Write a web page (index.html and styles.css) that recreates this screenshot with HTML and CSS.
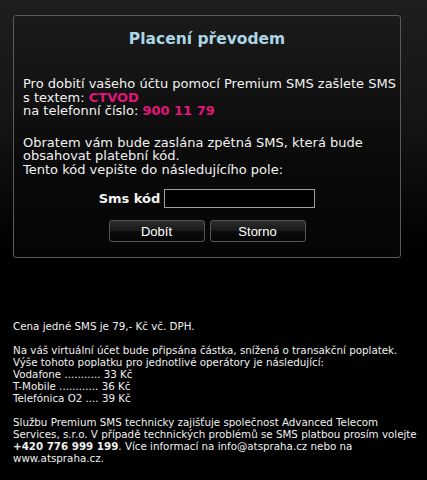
FILE: index.html
```html
<!DOCTYPE html>
<html lang="cs">
<head>
  <meta charset="UTF-8">
  <title>Placení převodem</title>
  <link rel="stylesheet" href="styles.css">
</head>
<body>
  <div class="panel">
    <h1>Placení převodem</h1>

    <p class="info">
      Pro dobití vašeho účtu pomocí Premium SMS zašlete SMS<br>
      s textem: <strong class="pink">CTVOD</strong><br>
      na telefonní číslo: <strong class="pink">900 11 79</strong>
    </p>

    <p class="info">
      Obratem vám bude zaslána zpětná SMS, která bude<br>
      obsahovat platební kód.<br>
      Tento kód vepište do následujícího pole:
    </p>

    <div class="code-row">
      <label for="sms-code">Sms kód</label>
      <input type="text" id="sms-code">
    </div>

    <div class="buttons">
      <button class="btn">Dobít</button>
      <button class="btn">Storno</button>
    </div>
  </div>

  <div class="notes">
    <p>Cena jedné SMS je 79,- Kč vč. DPH.</p>
    <p>
      Na váš virtuální účet bude připsána částka, snížená o transakční poplatek.<br>
      Výše tohoto poplatku pro jednotlivé operátory je následující:<br>
      Vodafone ........... 33 Kč<br>
      T-Mobile ............ 36 Kč<br>
      Telefónica O2 .... 39 Kč
    </p>
    <p>
      Službu Premium SMS technicky zajišťuje společnost Advanced Telecom
      Services, s.r.o. V případě technických problémů se SMS platbou prosím volejte
      <b>+420 776 999 199</b>. Více informací na info@atspraha.cz nebo na
      www.atspraha.cz.
    </p>
  </div>
</body>
</html>
```

FILE: styles.css
```css
html {
  background: #000;
}

body {
  margin: 0;
  min-height: 480px;
  font-family: "DejaVu Sans", Verdana, sans-serif;
  color: #f2f2f2;
  background: linear-gradient(#1e1e1e 0, #151515 120px, #000 250px);
  padding-top: 15px;
  box-sizing: border-box;
}

.panel {
  width: 386px;
  height: 241px;
  margin: 0 0 0 13px;
  border: 1px solid #5a5a5a;
  border-radius: 3px;
  background: linear-gradient(#1b1b1b, #0a0a0a 60%, #050505);
}

.panel h1 {
  margin: 0;
  padding-top: 12px;
  text-align: center;
  font-size: 15.5px;
  line-height: 22px;
  color: #acd5e6;
}

.info {
  margin: 27px 0 0 9px;
  font-size: 13px;
  line-height: 13.5px;
}

.info + .info {
  margin-top: 18px;
}

.pink {
  color: #e2167a;
}

.code-row {
  display: flex;
  align-items: center;
  justify-content: center;
  gap: 4px;
  margin-top: 13px;
}

.code-row label {
  font-weight: bold;
  font-size: 13px;
}

.code-row input {
  width: 145px;
  height: 17px;
  padding: 0 2px;
  margin: 0;
  border: 1px solid #a0a0a0;
  background: #000;
  color: #fff;
}

.buttons {
  display: flex;
  justify-content: center;
  gap: 5px;
  margin-top: 12px;
}

.btn {
  width: 96px;
  height: 22px;
  border: 1px solid #555;
  border-radius: 3px;
  background: linear-gradient(#2c2c2c, #1a1a1a 50%, #0c0c0c 51%, #050505);
  color: #fff;
  font-family: "Liberation Sans", Arial, sans-serif;
  font-size: 13px;
  padding: 0;
}

.notes {
  margin: 62px 0 0 13px;
  font-size: 10.3px;
  line-height: 12px;
  color: #f0f0f0;
}

.notes p {
  margin: 0 0 12px;
}
```
